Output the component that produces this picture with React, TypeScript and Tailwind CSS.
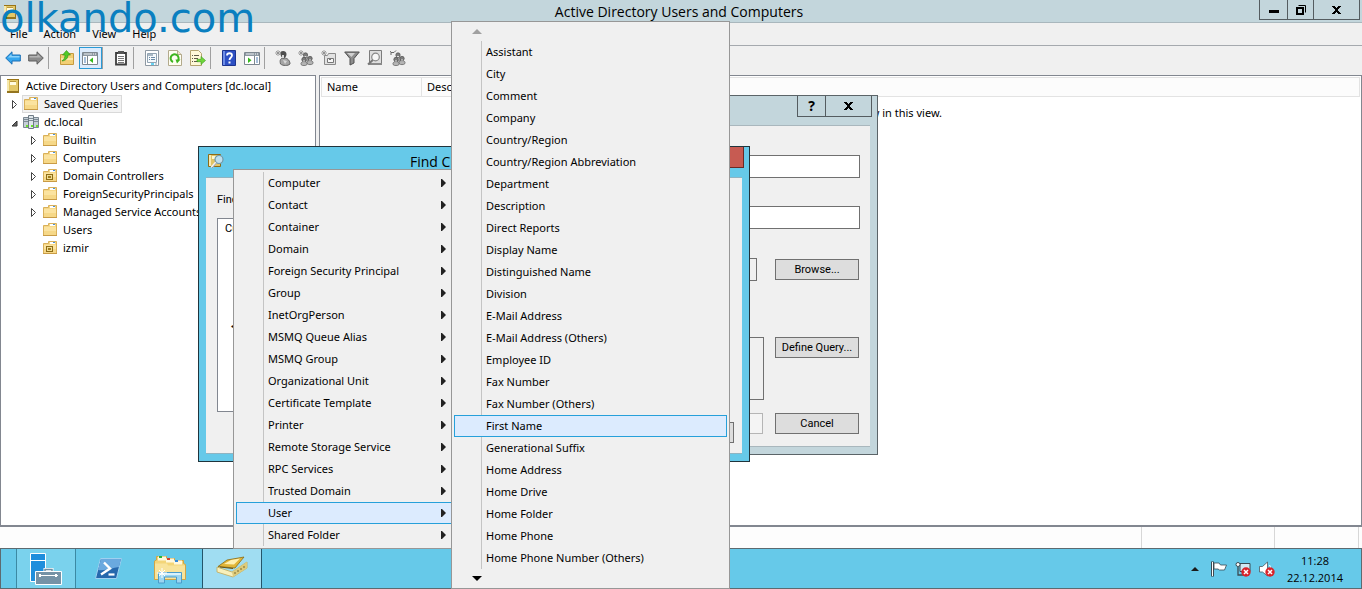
import React from 'react';

type TreeNode = {
  label: string;
  kind: 'folder' | 'ou';
  expandable: boolean;
};

const treeNodes: TreeNode[] = [
  { label: 'Builtin', kind: 'folder', expandable: true },
  { label: 'Computers', kind: 'folder', expandable: true },
  { label: 'Domain Controllers', kind: 'ou', expandable: true },
  { label: 'ForeignSecurityPrincipals', kind: 'folder', expandable: true },
  { label: 'Managed Service Accounts', kind: 'folder', expandable: true },
  { label: 'Users', kind: 'folder', expandable: false },
  { label: 'izmir', kind: 'ou', expandable: false },
];

const objectTypes = [
  'Computer',
  'Contact',
  'Container',
  'Domain',
  'Foreign Security Principal',
  'Group',
  'InetOrgPerson',
  'MSMQ Queue Alias',
  'MSMQ Group',
  'Organizational Unit',
  'Certificate Template',
  'Printer',
  'Remote Storage Service',
  'RPC Services',
  'Trusted Domain',
  'User',
  'Shared Folder',
];

const userFields = [
  'Assistant',
  'City',
  'Comment',
  'Company',
  'Country/Region',
  'Country/Region Abbreviation',
  'Department',
  'Description',
  'Direct Reports',
  'Display Name',
  'Distinguished Name',
  'Division',
  'E-Mail Address',
  'E-Mail Address (Others)',
  'Employee ID',
  'Fax Number',
  'Fax Number (Others)',
  'First Name',
  'Generational Suffix',
  'Home Address',
  'Home Drive',
  'Home Folder',
  'Home Phone',
  'Home Phone Number (Others)',
];

/* ---------- Icons ---------- */

const Svg: React.FC<{ children: React.ReactNode; className?: string; box?: string }> = ({
  children,
  className = 'h-4 w-4',
  box = '0 0 16 16',
}) => (
  <svg className={`shrink-0 ${className}`} viewBox={box} fill="none" aria-hidden="true">
    {children}
  </svg>
);

const ConsoleIcon = () => (
  <Svg>
    <path d="M2 1h12v14H2z" fill="#e3c868" />
    <path d="M2 1h12v1H2z" fill="#9a7414" />
    <path d="M2 2h2v11H2z" fill="#f6e9ae" />
    <path d="M13 2h1v13h-1zM2 13h12v2H2z" fill="#94751f" />
    <path d="M5 4h6v3H5z" fill="#fffbe0" />
    <path d="M5 3h6v1H5z" fill="#b8983c" />
  </Svg>
);

const FolderIcon = ({ ou = false }: { ou?: boolean }) => (
  <Svg>
    <path d="M1.500 3.500h5v-2h8v12h-13z" fill="#f6d888" stroke="#d9b05a" />
    <path d="M8 2h5v2H8z" fill="#fff" />
    <path d="M11 2h2v1h-2z" fill="#4a90d9" />
    <path d="M2 5h12v4H2z" fill="#fbe3a0" />
    <path d="M1 13h14v1H1z" fill="#c99b45" />
    {ou && (
      <>
        <path d="M4 6h7v6H4z" fill="#8f6d16" />
        <path d="M5 7h5v4H5z" fill="#efdc92" />
        <path d="M6 8h3v2H6z" fill="#a07c1e" />
      </>
    )}
  </Svg>
);

const DomainIcon = () => (
  <Svg>
    <path d="M.5 3.500h5v10h-5zM10.500 3.500h5v10h-5z" fill="#c6d0d7" stroke="#7b8892" />
    <path d="M5.500 1.500h5v13h-5z" fill="#dfe6ea" stroke="#6f7c86" />
    <path d="M1 5.500h4M1 7.500h4M11 5.500h4M11 7.500h4M6 4.500h4M6 6.500h4" stroke="#7d8b95" />
    <path d="M3 11h2v2H3zM13 11h2v2h-2zM8 11h2v2H8z" fill="#6be02c" />
  </Svg>
);

const BackIcon = () => (
  <Svg>
    <path d="M.7 8L7 1.800V5H15.300v6H7v3.200z" fill="#35a6ee" stroke="#1b6fb5" />
    <path d="M3 7.500L6.500 4v2h8v1.500z" fill="#8bd2fa" />
  </Svg>
);

const ForwardIcon = () => (
  <Svg>
    <path d="M15.300 8L9 1.800V5H.7v6H9v3.200z" fill="#8c8c8c" stroke="#5c5c5c" />
    <path d="M13 7.500L9.500 4v2h-8v1.500z" fill="#b5b5b5" />
  </Svg>
);

const FolderUpIcon = () => (
  <Svg>
    <path d="M1.500 4.500h5l1-1h7v11h-13z" fill="#f2cf74" stroke="#c69a3e" />
    <path d="M2 8h12v2H2z" fill="#fae6a8" />
    <path d="M3 11c4-.5 6-3 6-6h2.500L7.500.500 3.500 5H6c0 3-1 4-3 6z" fill="#52c926" stroke="#2b8f14" strokeWidth=".6" />
  </Svg>
);

const PaneIcon = ({ right = false }: { right?: boolean }) => (
  <Svg>
    <path d="M.5 2.500h15v12H.5z" fill="#fff" stroke="#7d8790" />
    <path d="M1 3h14v3H1z" fill="#8d98a2" />
    <path d="M2 4h8" stroke="#e8ecef" />
    <path d="M11 4h1M13 4h1" stroke="#fff" />
    {right ? (
      <>
        <path d="M10.500 6v8" stroke="#7d8790" />
        <path d="M12 8h2M12 10h2M12 12h2" stroke="#4f7fb5" />
        <path d="M4 7.500v5.500L7.500 10.200z" fill="#35b81b" />
      </>
    ) : (
      <>
        <path d="M5.500 6v8" stroke="#7d8790" />
        <path d="M2 8h2M2 10h2M2 12h2" stroke="#4f7fb5" />
        <path d="M11 7.500v5.500L7.500 10.200z" fill="#35b81b" />
      </>
    )}
  </Svg>
);

const ClipboardIcon = () => (
  <Svg>
    <path d="M3 3h10v11.500H3z" fill="#fff" stroke="#3d3d3d" strokeWidth="1.800" />
    <path d="M5 1h6v3H5z" fill="#555" />
    <path d="M5 6.500h6M5 8.500h6M5 10.500h6M5 12.500h6" stroke="#777" />
  </Svg>
);

const PropertiesIcon = () => (
  <Svg>
    <path d="M1.500.5h13v15h-13z" fill="#fff" stroke="#8e99a3" />
    <path d="M3.500 3.500h9v9h-9z" fill="#f5f9fc" stroke="#91a3b2" />
    <path d="M4 4h5v2H4z" fill="#a9b8c4" />
    <path d="M5 7.500h1M7 7.500h4M5 9.500h1M7 9.500h4" stroke="#6b8aa6" />
    <path d="M7 14h3" stroke="#34c3ee" strokeWidth="1.500" />
    <path d="M11 14h2" stroke="#9aa6b0" />
  </Svg>
);

const RefreshIcon = () => (
  <Svg>
    <path d="M1.500.5h9l4 4v11h-13z" fill="#fffef2" stroke="#b3aa8c" />
    <path d="M10.500.5v4h4" fill="#eee6c8" stroke="#b3aa8c" />
    <path d="M6 12A4 4 0 1 1 11 10.500" stroke="#3eb51f" strokeWidth="2" />
    <path d="M8.500 9.500h5L10 13.500z" fill="#3eb51f" />
  </Svg>
);

const ExportIcon = () => (
  <Svg>
    <path d="M.5.5h8l3 3v12H.5z" fill="#fff8d8" stroke="#b5a470" />
    <path d="M2 5.500h1M2 8.500h1M2 11.500h1M4 5.500h5M4 8.500h4M4 11.500h4" stroke="#5f5a48" />
    <path d="M7 9.300h4V6.500l4.500 4-4.500 4v-2.800H7z" fill="#6fd63a" stroke="#3b9b1c" strokeWidth=".6" />
  </Svg>
);

const HelpIcon = () => (
  <Svg>
    <path d="M1.500.5h13v15h-13z" fill="#2d50c4" stroke="#1d348f" />
    <path d="M2 1h2v14H2z" fill="#6d8de6" />
    <path d="M6 5.500c0-3 5-3 5 0 0 2-2.500 2-2.500 4.500" stroke="#fff" strokeWidth="1.800" />
    <path d="M7.500 11.500h2v2h-2z" fill="#fff" />
  </Svg>
);

const Person = ({ x, y }: { x: number; y: number }) => (
  <>
    <path d={`M${x - 3} ${y + 5}c-1-4 7-4 6 0-1 1.500-5 1.500-6 0z`} fill="#b4b4b4" stroke="#6a6a6a" strokeWidth=".8" />
    <circle cx={x} cy={y} r="2.200" fill="#7c7c7c" stroke="#505050" strokeWidth=".7" />
    <path d={`M${x - 1} ${y + 1}h2v1h-2z`} fill="#ddd" />
  </>
);

const Spark = () => (
  <path d="M3 0v6M0 3h6M1 1l4 4M5 1L1 5" stroke="#8a8a8a" strokeWidth=".8" />
);

const NewUserIcon = () => (
  <Svg>
    <path d="M5.500 14c-1-4 0-6 3.500-6 4 0 6 3 6 6-2 2-7 2-9.500 0z" fill="#a5a5a5" stroke="#646464" />
    <path d="M5.500 2c2-2 6-1 6 2 0 2-1 4-3 4.500C6.500 8 5 5 5.500 2z" fill="#4e4e4e" />
    <path d="M7 5h2v3H7zM8 10l4 1-2 3z" fill="#d8d8d8" />
    <Spark />
  </Svg>
);

const NewGroupIcon = () => (
  <Svg>
    <Person x={7.5} y={5} />
    <Person x={12} y={8.5} />
    <Person x={6} y={9.5} />
    <Spark />
  </Svg>
);

const NewOuIcon = () => (
  <Svg>
    <path d="M3.500 5.500h3l1-2h7v11h-11z" fill="#e2e2e2" stroke="#8a8a8a" />
    <path d="M6.500 8.500h6v4h-6z" fill="#f7f7f7" stroke="#777" />
    <path d="M8 9h2v1H8z" fill="#777" />
    <Spark />
  </Svg>
);

const FilterIcon = () => (
  <Svg>
    <path d="M.7 2H15.300L10 8.500V13l-4 2V8.500z" fill="#8d8d8d" stroke="#4f4f4f" />
    <path d="M3 3h8L7.500 7z" fill="#d0d0d0" />
  </Svg>
);

const FindIcon = () => (
  <Svg>
    <path d="M2.500.5h12v13h-12z" fill="#dedede" stroke="#7b7b7b" />
    <path d="M2 13h13v2H2z" fill="#8a8a8a" />
    <circle cx="8.500" cy="7" r="3.800" fill="#f7f7f7" stroke="#888" strokeWidth="1.200" />
    <path d="M5.800 10L1 14.500" stroke="#777" strokeWidth="2" />
  </Svg>
);

const AddToGroupIcon = () => (
  <Svg>
    <Person x={8} y={5} />
    <Person x={12} y={8.5} />
    <Person x={6} y={9.5} />
    <path d="M1 5V2.500h3L6 .5M1 2.500L0 1" stroke="#666" />
  </Svg>
);

const FindDialogIcon = () => (
  <Svg>
    <path d="M.5 1.500h12v12H.5z" fill="#e0c466" stroke="#8d6c17" />
    <path d="M1 2h2v11H1z" fill="#f7eab4" />
    <path d="M4 3h4v3H4z" fill="#fff7cf" />
    <circle cx="11" cy="6.500" r="4" fill="#bfe0ee" stroke="#6f97a8" strokeWidth="1.200" />
    <path d="M8 9.500L3.500 14.500" stroke="#f2f2f2" strokeWidth="2.400" />
    <path d="M8.500 10l-4.500 5" stroke="#808080" strokeWidth=".8" />
  </Svg>
);

const CloseGlyph = () => (
  <Svg className="h-2 w-[9px]" box="0 0 9 8">
    <path d="M0 0h3v1h1v1h1V1h1V0h3v1H8v1H7v1H6v2h1v1h1v1h1v1H6V7H5V6H4v1H3v1H0V7h1V6h1V5h1V3H2V2H1V1H0z" fill="#000" />
  </Svg>
);

const ServerManagerIcon = () => (
  <Svg className="h-8 w-8" box="0 0 32 32">
    <path d="M.5.500h15v28H.5z" fill="#1f8edc" stroke="#fff" />
    <path d="M.5 7.500h15" stroke="#fff" />
    <path d="M15 19v-2.500h7V19" stroke="#fff" strokeWidth="3" />
    <path d="M15 19v-2.500h7V19" stroke="#6f8ea3" strokeWidth="1.500" />
    <path d="M5.500 18.500h26v13h-26z" fill="#7592a6" stroke="#fff" />
    <path d="M9 22.500h19" stroke="#fff" />
    <path d="M10 21v3M26 21v3" stroke="#fff" strokeWidth="2" />
  </Svg>
);

const PowerShellIcon = () => (
  <Svg className="h-8 w-8" box="0 0 32 32">
    <path d="M8.500 5.500h21l-5 20h-21z" fill="#2668ad" stroke="#9fd0f0" strokeLinejoin="round" />
    <path d="M9 6h20l-2 8c-7 1-13 4-21 3z" fill="#6aa9df" />
    <path d="M12 9.500l6 6-9 6" stroke="#fff" strokeWidth="2.400" />
    <path d="M16.500 21.500h6" stroke="#fff" strokeWidth="2.200" />
  </Svg>
);

const ExplorerIcon = () => (
  <Svg className="h-8 w-8" box="0 0 32 32">
    <path d="M.5 8l2-1V3.500h10v2h8v2h9v3l2 1v15H.5z" fill="#f3d578" stroke="#d1a545" />
    <path d="M4 3.500h8v4H4zM12 5.500h8v4h-8zM20 7.500h8v4h-8z" fill="#fff8dd" />
    <path d="M5 3h3v2H5z" fill="#27b53a" />
    <path d="M13 5h3v2h-3z" fill="#d8402c" />
    <path d="M21 7h3v2h-3z" fill="#3489dd" />
    <path d="M1 10.500h12l1 2h17V26H1z" fill="#f8e39b" />
    <path d="M4.500 30V19.500h23V30h-5v-6h-12v6z" fill="#9bd5f1" stroke="#4a9ccb" />
    <path d="M5 21h22" stroke="#d8f1fc" strokeWidth="2" />
    <path d="M8 15v10M3 20h10M5 17l6 6M11 17l-6 6" stroke="#fff" />
  </Svg>
);

const AdBookIcon = () => (
  <Svg className="h-8 w-8" box="0 0 32 32">
    <path d="M1 14l15 5 15-10v6l-14 9-16-5z" fill="#f8f0bb" stroke="#c1a956" strokeWidth=".8" />
    <path d="M16 19l15-10v6l-14 9z" fill="#dccb7c" />
    <path d="M2 13.500L11 7l17-3-9 11z" fill="#e2b638" stroke="#8a6b14" strokeWidth=".8" />
    <path d="M8 11l7-4 9-1.500-6 6z" fill="#fff0b0" />
    <path d="M4 14l13 1.500" stroke="#6f560f" />
    <path d="M19 19v2M22 17v2M25 15v2M28 13v2" stroke="#7d6a2b" />
  </Svg>
);

const RedBadge = ({ x, y }: { x: number; y: number }) => (
  <>
    <circle cx={x} cy={y} r="4.700" fill="#d8232a" />
    <path d={`M${x - 2} ${y - 2}l4 4M${x + 2} ${y - 2}l-4 4`} stroke="#fff" strokeWidth="1.500" />
  </>
);

const FlagIcon = () => (
  <Svg>
    <path d="M1.500.5v15" stroke="#3b4a52" strokeWidth="3" />
    <path d="M1.500 1v14" stroke="#fff" />
    <path d="M3 2h5l1.500 2H15.500l-2 5H8.500L7 8H3z" fill="#fff" stroke="#3b4a52" strokeWidth=".8" />
  </Svg>
);

const NetworkIcon = () => (
  <Svg>
    <path d="M5 2.500h10v8H5z" fill="#cfe9f4" stroke="#3b4a52" />
    <circle cx="3" cy="3.500" r="2" fill="#fff" stroke="#3b4a52" />
    <path d="M3 6v8h5" stroke="#3b4a52" strokeWidth="1.300" />
    <RedBadge x={11} y={11} />
  </Svg>
);

const VolumeIcon = () => (
  <Svg>
    <path d="M.5 5.500h3L8.500 1v14L3.500 11h-3z" fill="#fff" stroke="#4a5860" strokeWidth=".8" />
    <path d="M10.500 4c1.500 2 1.500 5 0 8" stroke="#fff" />
    <RedBadge x={11} y={11} />
  </Svg>
);

const toolbarGroups: { label: string; icon: React.ReactNode; active?: boolean }[][] = [
  [
    { label: 'Back', icon: <BackIcon /> },
    { label: 'Forward', icon: <ForwardIcon /> },
  ],
  [
    { label: 'Up one level', icon: <FolderUpIcon /> },
    { label: 'Show/Hide console tree', icon: <PaneIcon />, active: true },
  ],
  [{ label: 'Paste', icon: <ClipboardIcon /> }],
  [
    { label: 'Properties', icon: <PropertiesIcon /> },
    { label: 'Refresh', icon: <RefreshIcon /> },
    { label: 'Export list', icon: <ExportIcon /> },
  ],
  [
    { label: 'Help', icon: <HelpIcon /> },
    { label: 'Show/Hide action pane', icon: <PaneIcon right /> },
  ],
  [
    { label: 'New user', icon: <NewUserIcon /> },
    { label: 'New group', icon: <NewGroupIcon /> },
    { label: 'New organizational unit', icon: <NewOuIcon /> },
    { label: 'Filter options', icon: <FilterIcon /> },
    { label: 'Find objects', icon: <FindIcon /> },
    { label: 'Add to group', icon: <AddToGroupIcon /> },
  ],
];

/* ---------- Small parts ---------- */

const Expander = ({ open = false }: { open?: boolean }) => (
  <Svg className="h-2.5 w-[7px]" box="0 0 7 10">
    {open ? (
      <path d="M6 4v5H1z" fill="#666" stroke="#333" />
    ) : (
      <path d="M1.500 1.500v8L5.500 5.500z" fill="#fff" stroke="#444" />
    )}
  </Svg>
);

const DialogButton: React.FC<{ children: React.ReactNode }> = ({ children }) => (
  <button className="h-[21px] w-[84px] shrink-0 border border-[#707070] bg-[#dddddd] font-[Roboto,sans-serif]">
    {children}
  </button>
);

/* ---------- Main window ---------- */

const TitleBar = () => (
  <header className="flex h-[23px] shrink-0 items-start justify-center border-b border-[#a9b7bd] bg-[#c3d6dc]">
    <div className="flex flex-1 pt-1 pl-0.5">
      <ConsoleIcon />
    </div>
    <h1 className="pr-1 font-['Open_Sans',sans-serif] text-sm leading-6">Active Directory Users and Computers</h1>
    <div className="flex flex-1 justify-end pr-[2px]">
      <div className="flex h-5 divide-x divide-[#545c60] border border-t-0 border-[#545c60]">
        <button aria-label="Minimize" className="flex w-7 items-center justify-center pt-1">
          <span className="h-[3px] w-2.5 bg-black" />
        </button>
        <button aria-label="Restore" className="flex w-[26px] items-center justify-center">
          <Svg className="h-2.5 w-2.5" box="0 0 10 10">
            <path d="M1 3h6v6H1z" stroke="#000" strokeWidth="2" />
            <path d="M2.500.5h7v7" stroke="#000" />
          </Svg>
        </button>
        <button aria-label="Close" className="flex w-[45px] items-center justify-center">
          <CloseGlyph />
        </button>
      </div>
    </div>
  </header>
);

const MenuBar = () => (
  <nav className="flex h-[23px] shrink-0 items-center gap-4 border-b border-[#a5a9ae] px-2.5">
    {['File', 'Action', 'View', 'Help'].map((item) => (
      <button key={item}>{item}</button>
    ))}
  </nav>
);

const Toolbar = () => (
  <div className="flex h-[29px] shrink-0 items-start pt-px pl-0.5">
    {toolbarGroups.map((group, i) => (
      <React.Fragment key={i}>
        {i > 0 && <span className="mr-[7px] h-[22px] w-px bg-[#a0a0a0]" />}
        {group.map((tool) => (
          <button
            key={tool.label}
            aria-label={tool.label}
            className={`flex h-[22px] w-[23px] items-center justify-center pr-px ${
              tool.active ? 'border border-[#2a9ad6] bg-[#dcebfc]' : ''
            }`}
          >
            {tool.icon}
          </button>
        ))}
      </React.Fragment>
    ))}
  </div>
);

const Tree = () => (
  <aside className="w-[316px] shrink-0 overflow-hidden border border-[#828790] bg-white pt-px whitespace-nowrap">
    <div className="flex h-[18px] items-center gap-[5px] pl-1">
      <ConsoleIcon />
      <span>Active Directory Users and Computers [dc.local]</span>
    </div>
    <div className="flex h-[18px] items-center gap-1 pl-2.5">
      <Expander />
      <span className="flex h-[18px] items-center gap-[5px] border border-[#d9d9d9] bg-[#f3f3f3] pr-[3px]">
        <FolderIcon />
        <span>Saved Queries</span>
      </span>
    </div>
    <div className="flex h-[18px] items-center gap-[5px] pl-2.5">
      <Expander open />
      <DomainIcon />
      <span>dc.local</span>
    </div>
    {treeNodes.map((node) => (
      <div key={node.label} className="flex h-[18px] items-center gap-[5px] pl-[29px]">
        {node.expandable ? <Expander /> : <span className="w-[7px]" />}
        <FolderIcon ou={node.kind === 'ou'} />
        <span>{node.label}</span>
      </div>
    ))}
  </aside>
);

const ListPane = () => (
  <main className="min-w-0 flex-1 border border-[#828790] bg-white p-px">
    <table className="w-full table-fixed border-collapse text-left">
      <thead>
        <tr className="h-[19px] bg-[#fcfcfc]">
          <th className="w-[100px] border border-[#e3e3e3] px-[5px] font-normal">Name</th>
          <th className="border border-[#e3e3e3] px-[5px] font-normal">Description</th>
        </tr>
      </thead>
      <tbody>
        <tr>
          <td colSpan={2} className="pt-2 text-center">
            There are no items to show in this view.
          </td>
        </tr>
      </tbody>
    </table>
  </main>
);

const StatusBar = () => (
  <footer className="flex h-[22px] shrink-0 justify-end border-t border-[#828790] bg-[#fdfdfd] pr-[3px]">
    <span className="w-[133px] border-l border-[#d7d7d7]" />
    <span className="w-[85px] border-x border-[#d7d7d7]" />
  </footer>
);

/* ---------- Dialogs ---------- */

const NewQueryDialog = () => (
  <section
    aria-label="New Query"
    className="absolute top-[95px] left-[500px] w-[378px] border border-[#5b6468] bg-[#c3d6dc] px-[7px] pb-[7px]"
  >
    <div className="flex h-[29px] items-start justify-end">
      <div className="-mr-[2px] flex h-[21px] divide-x divide-[#545c60] border border-t-0 border-[#545c60]">
        <button aria-label="Help" className="w-7 text-sm font-bold">
          ?
        </button>
        <button aria-label="Close" className="flex w-[45px] items-center justify-center">
          <CloseGlyph />
        </button>
      </div>
    </div>
    <div className="flex flex-col border-y border-[#a9b7bd] bg-[#f0f0f0] px-2.5 pt-[29px] pb-3 font-[Roboto,sans-serif]">
      <input aria-label="Name" className="h-[23px] border border-[#707070] bg-white" />
      <input aria-label="Description" className="mt-7 h-[23px] border border-[#707070] bg-white" />
      <div className="mt-[29px] flex items-center gap-[18px] pr-px">
        <input aria-label="Query root" className="h-[23px] min-w-0 flex-1 border border-[#707070] bg-[#f0f0f0]" />
        <DialogButton>Browse...</DialogButton>
      </div>
      <div className="mt-14 flex gap-[11px] pr-px">
        <textarea
          aria-label="Query string"
          className="block h-[63px] min-w-0 flex-1 resize-none border border-[#707070] bg-[#f0f0f0]"
        />
        <DialogButton>Define Query...</DialogButton>
      </div>
      <div className="mt-[13px] flex justify-end gap-3 pr-px">
        <button disabled className="h-[21px] w-[84px] border border-[#b5b5b5] bg-[#f4f4f4] text-[#838383]">
          OK
        </button>
        <DialogButton>Cancel</DialogButton>
      </div>
    </div>
  </section>
);

const FindDialog = () => (
  <section
    aria-label="Find Custom Search"
    className="absolute top-[146px] left-[198px] w-[552px] border border-[#20343c] bg-[#66c9e9] px-[7px] pb-[7px]"
  >
    <div className="flex h-[30px] items-start">
      <div className="flex flex-1 pt-1.5 pl-0.5">
        <FindDialogIcon />
      </div>
      <h2 className="pt-[3px] font-['Open_Sans',sans-serif] text-sm leading-6">Find Custom Search</h2>
      <div className="flex flex-1 justify-end">
        <button
          aria-label="Close"
          className="-mr-[2px] flex h-[21px] w-[45px] items-center justify-center border border-t-0 border-[#6b2a26] bg-[#c75b52] pr-2"
        >
          <CloseGlyph />
        </button>
      </div>
    </div>
    <div className="flex flex-col border-y border-[#8fb4c2] bg-[#f0f0f0] pt-3.5 pr-[13px] pb-2.5 pl-[11px] font-[Roboto,sans-serif]">
      <label htmlFor="find-kind" className="leading-4">
        Find:
      </label>
      <div className="mt-2.5 flex h-[194px] flex-col gap-20 border border-[#828790] bg-white px-[7px]">
        <output id="find-kind" className="leading-5">
          Custom Search
        </output>
        <p className="pl-1.5">&lt;Add criteria from above to this list&gt;</p>
      </div>
      <div className="mt-2.5 -mr-[5px] flex justify-end">
        <DialogButton>Clear All</DialogButton>
      </div>
    </div>
  </section>
);

/* ---------- Popup menus ---------- */

const ObjectTypeMenu = () => (
  <div role="menu" className="absolute top-[169px] left-[233px] w-[220px] border border-[#979797] bg-[#f0f0f0] py-0.5 pl-0.5">
    <div className="bg-[linear-gradient(#c4c4c4,#c4c4c4)] bg-[length:1px_100%] bg-[position:27px_0] bg-no-repeat">
      {objectTypes.map((type) => (
        <button
          key={type}
          role="menuitem"
          className={`flex h-[22px] w-full items-center justify-between border pr-[5px] pl-[31px] ${
            type === 'User' ? 'border-[#26a0da] bg-[#dcebfe]' : 'border-transparent'
          }`}
        >
          <span>{type}</span>
          <Svg className="h-2 w-[5px]" box="0 0 5 8">
            <path d="M0 0h1l4 4-4 4H0z" fill="#222" />
          </Svg>
        </button>
      ))}
    </div>
  </div>
);

const UserFieldMenu = () => (
  <div role="menu" className="absolute top-[21px] left-[451px] w-[279px] border border-[#979797] bg-[#f0f0f0] px-0.5">
    <button aria-label="Scroll up" className="flex h-[19px] w-[46px] items-center justify-center">
      <Svg className="h-[5px] w-2.5" box="0 0 10 5">
        <path d="M5 0l5 5H0z" fill="#a0a0a0" />
      </Svg>
    </button>
    <div className="bg-[linear-gradient(#c4c4c4,#c4c4c4)] bg-[length:1px_100%] bg-[position:27px_0] bg-no-repeat">
      {userFields.map((field) => (
        <button
          key={field}
          role="menuitem"
          className={`flex h-[22px] w-full items-center border pl-[31px] ${
            field === 'First Name' ? 'border-[#26a0da] bg-[#dcebfe]' : 'border-transparent'
          }`}
        >
          {field}
        </button>
      ))}
    </div>
    <button aria-label="Scroll down" className="flex h-[19px] w-[46px] items-center justify-center">
      <Svg className="h-[5px] w-2.5" box="0 0 10 5">
        <path d="M0 0h10L5 5z" fill="#000" />
      </Svg>
    </button>
  </div>
);

/* ---------- Taskbar ---------- */

const Taskbar = () => (
  <div className="flex h-[41px] shrink-0 items-stretch justify-between border border-[#5d6a70] bg-[#66c9e9]">
    <div className="flex gap-0.5 pl-[15px]">
      <button aria-label="Server Manager" className="flex w-[60px] items-center justify-center border-x border-[#3c89a3] bg-[#7ad2ed]">
        <ServerManagerIcon />
      </button>
      <button aria-label="Windows PowerShell" className="flex w-[60px] items-center justify-center">
        <PowerShellIcon />
      </button>
      <button aria-label="File Explorer" className="flex w-[60px] items-center justify-center">
        <ExplorerIcon />
      </button>
      <button
        aria-label="Active Directory Users and Computers"
        className="flex w-[60px] items-center justify-center border-x border-[#24556a] bg-[#a0ddf2]"
      >
        <AdBookIcon />
      </button>
    </div>
    <div className="flex items-center gap-2 pr-[18px]">
      <button aria-label="Show hidden icons" className="mr-1">
        <Svg className="h-1 w-2" box="0 0 8 4">
          <path d="M4 0l4 4H0z" fill="#1a1a1a" />
        </Svg>
      </button>
      <FlagIcon />
      <NetworkIcon />
      <VolumeIcon />
      <div className="ml-1 text-center font-['Open_Sans',sans-serif] leading-[17px]">
        <div>11:28</div>
        <div>22.12.2014</div>
      </div>
    </div>
  </div>
);

const App: React.FC = () => {
  return (
    <div className="relative flex h-screen flex-col overflow-hidden bg-[#f0f0f0] font-['Noto_Sans','Open_Sans',sans-serif] text-[11px] leading-4 text-black">
      <TitleBar />
      <MenuBar />
      <Toolbar />
      <div className="flex min-h-0 flex-1 gap-[3px]">
        <Tree />
        <ListPane />
      </div>
      <StatusBar />
      <Taskbar />

      <NewQueryDialog />
      <FindDialog />
      <ObjectTypeMenu />
      <UserFieldMenu />

      {/* Site watermark */}
      <div className="pointer-events-none absolute top-0 left-0 font-['DejaVu_Sans',sans-serif] text-[40px] leading-9 text-[#0a7fc0]">
        olkando.com
      </div>
    </div>
  );
};

export default App;
